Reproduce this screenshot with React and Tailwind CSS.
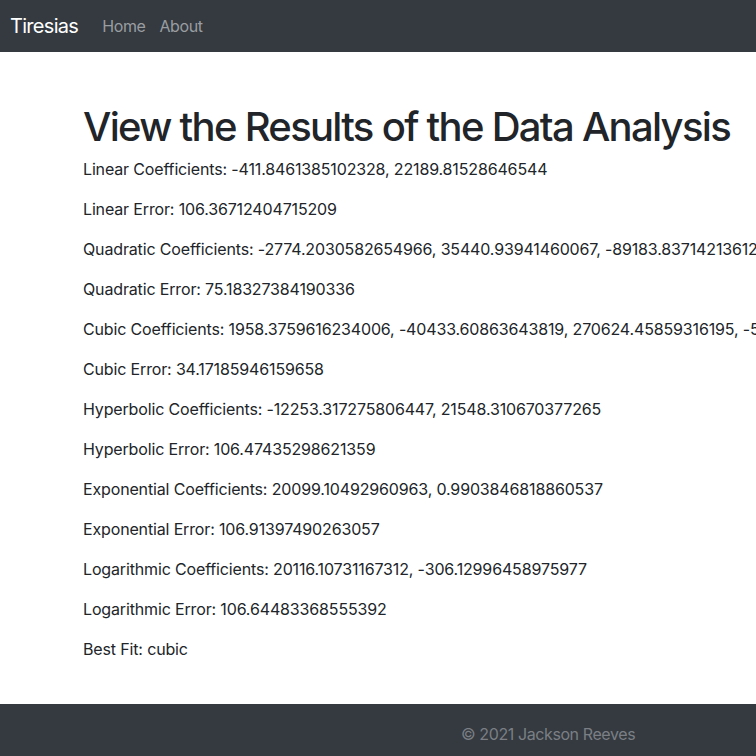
const results = [
  "Linear Coefficients: -411.8461385102328, 22189.81528646544",
  "Linear Error: 106.36712404715209",
  "Quadratic Coefficients: -2774.2030582654966, 35440.93941460067, -89183.83714213612",
  "Quadratic Error: 75.18327384190336",
  "Cubic Coefficients: 1958.3759616234006, -40433.60863643819, 270624.45859316195, -573946.5472413786",
  "Cubic Error: 34.17185946159658",
  "Hyperbolic Coefficients: -12253.317275806447, 21548.310670377265",
  "Hyperbolic Error: 106.47435298621359",
  "Exponential Coefficients: 20099.10492960963, 0.9903846818860537",
  "Exponential Error: 106.91397490263057",
  "Logarithmic Coefficients: 20116.10731167312, -306.12996458975977",
  "Logarithmic Error: 106.64483368555392",
  "Best Fit: cubic",
];

export default function App() {
  return (
    <div className="w-[756px] overflow-hidden bg-white text-[#212529] font-['Inter',sans-serif]">
      {/* Navbar */}
      <nav className="h-[52px] bg-[#343a40] flex items-center px-[10px]">
        <span className="text-white text-[20px] tracking-[-0.7px] mr-[24px]">Tiresias</span>
        <span className="text-[#9a9da1] text-[16px] tracking-[-0.4px] mr-[14px]">Home</span>
        <span className="text-[#9a9da1] text-[16px] tracking-[-0.4px]">About</span>
      </nav>

      {/* Results */}
      <main className="pl-[83px] pt-[51px] pb-[27px] whitespace-nowrap">
        <h1 className="text-[40px] leading-[48px] font-medium tracking-[-1.7px] mb-[6px]">
          View the Results of the Data Analysis
        </h1>
        {results.map((r) => (
          <p key={r} className="text-[16px] leading-[24px] mb-[16px] tracking-[-0.15px]">
            {r}
          </p>
        ))}
      </main>

      {/* Footer */}
      <footer className="h-[52px] bg-[#343a40] pt-[18px] pl-[461px]">
        <span className="text-[#7b7f85] text-[16px] leading-[24px] tracking-[-0.4px]">© 2021 Jackson Reeves</span>
      </footer>
    </div>
  );
}
